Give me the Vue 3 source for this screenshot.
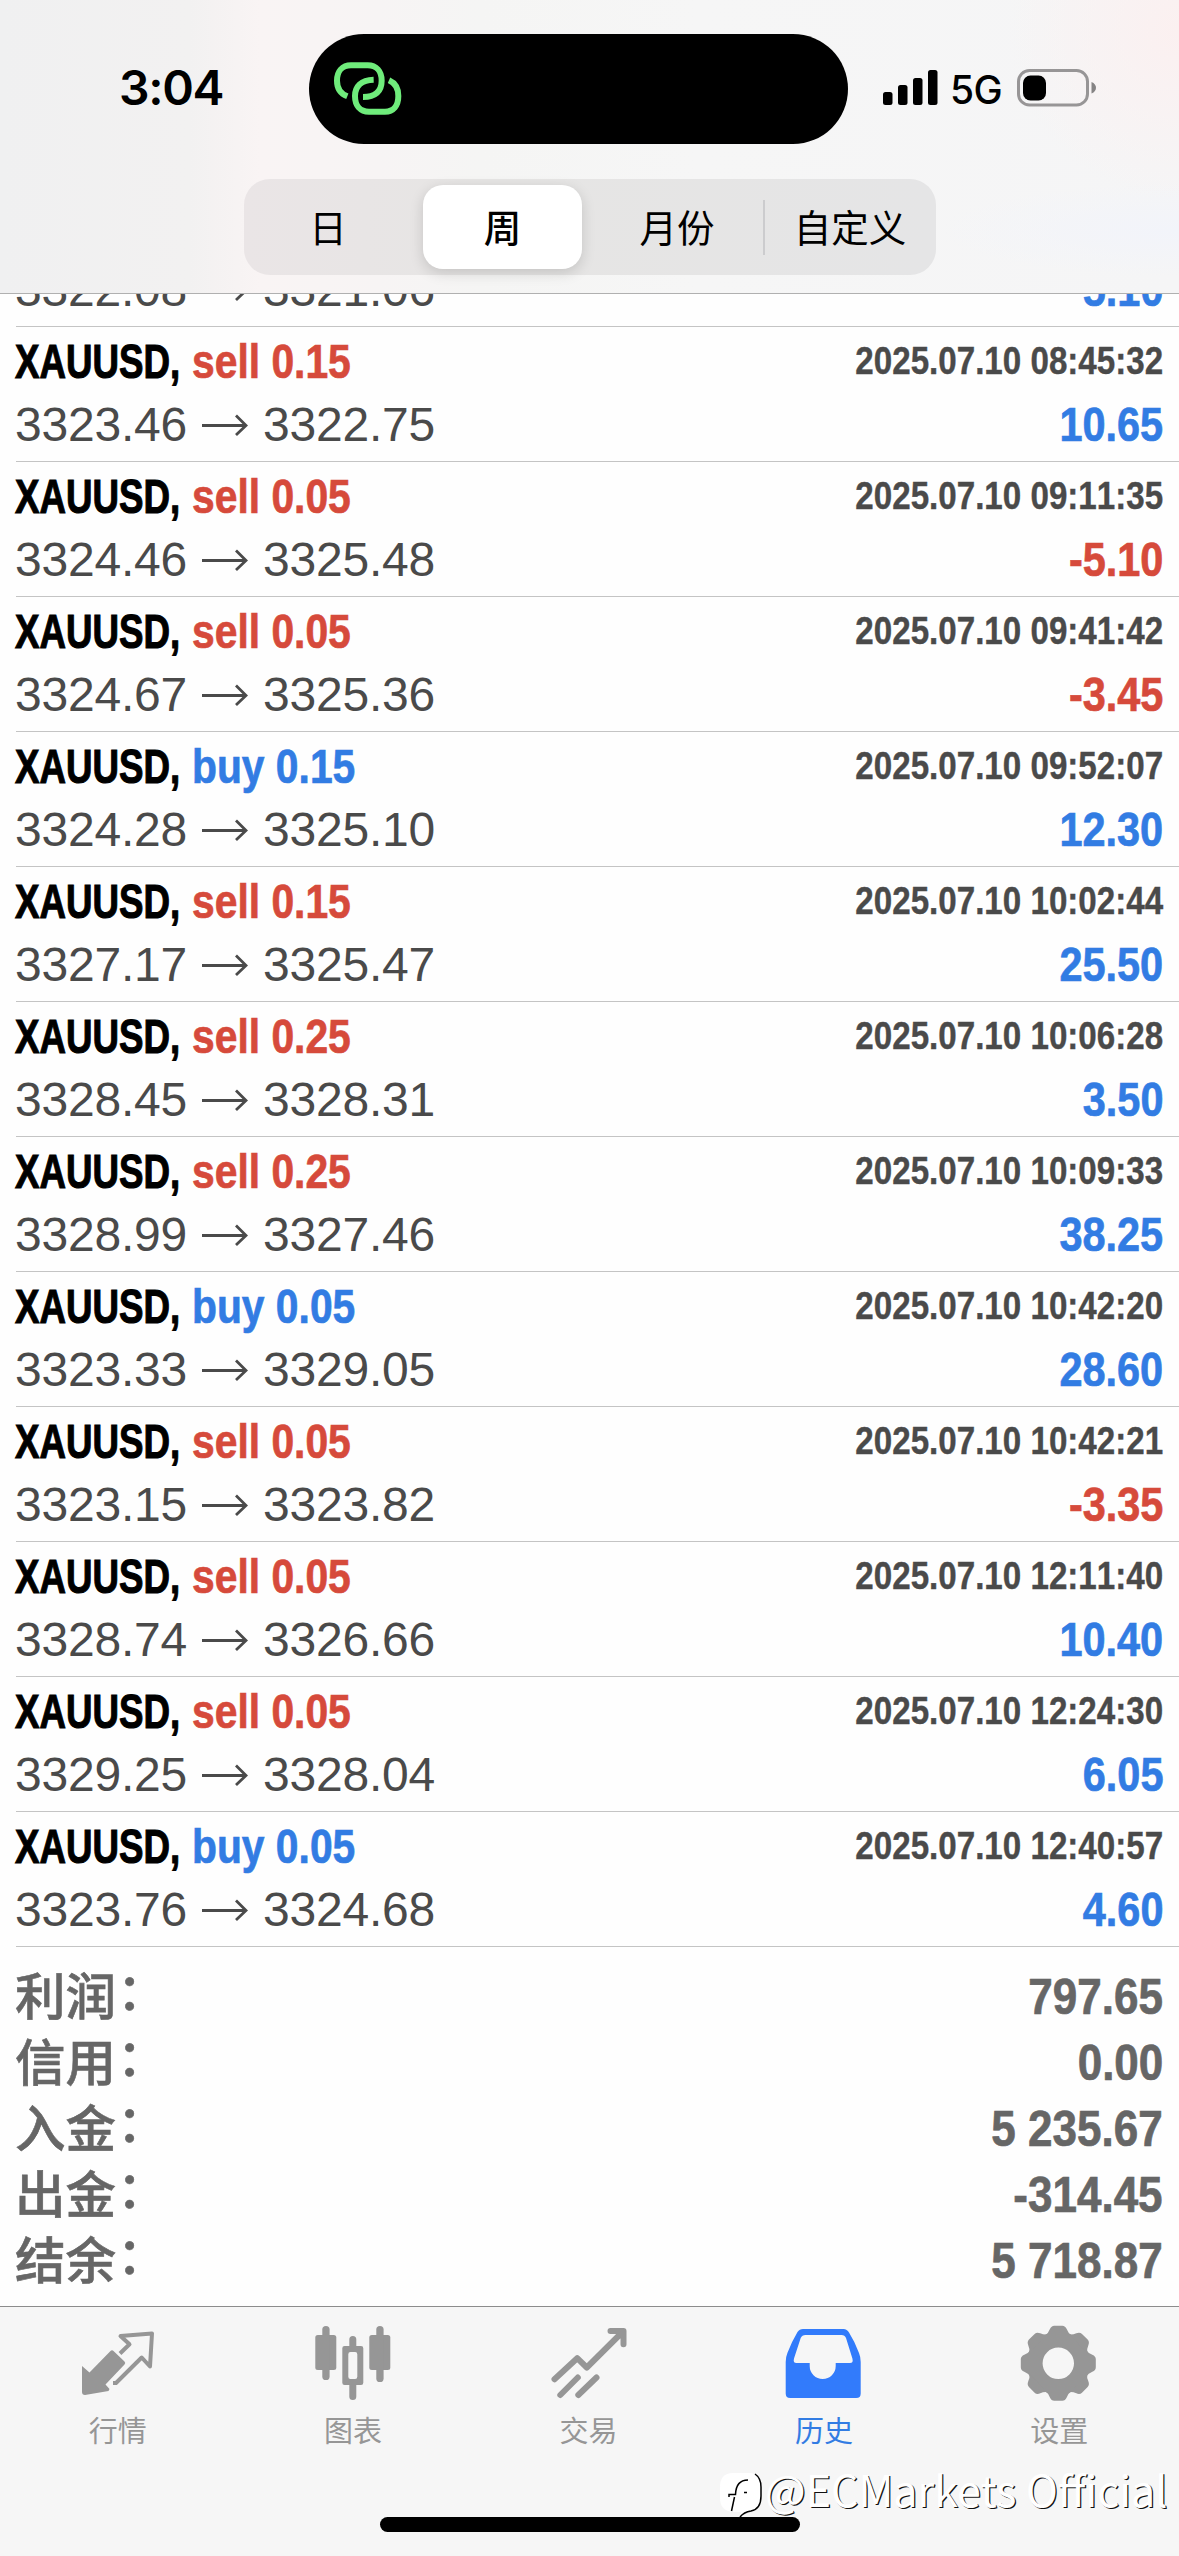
<script setup>
const periods = [
  { label: '日', width: 172 },
  { label: '周', width: 170, active: true },
  { label: '月份', width: 178 },
  { label: '自定义', width: 172, divided: true },
]

const deals = [
  ['sell', '0.05', '2025.07.10 08:41:17', '3322.08', '3321.06', '5.10'],
  ['sell', '0.15', '2025.07.10 08:45:32', '3323.46', '3322.75', '10.65'],
  ['sell', '0.05', '2025.07.10 09:11:35', '3324.46', '3325.48', '-5.10'],
  ['sell', '0.05', '2025.07.10 09:41:42', '3324.67', '3325.36', '-3.45'],
  ['buy', '0.15', '2025.07.10 09:52:07', '3324.28', '3325.10', '12.30'],
  ['sell', '0.15', '2025.07.10 10:02:44', '3327.17', '3325.47', '25.50'],
  ['sell', '0.25', '2025.07.10 10:06:28', '3328.45', '3328.31', '3.50'],
  ['sell', '0.25', '2025.07.10 10:09:33', '3328.99', '3327.46', '38.25'],
  ['buy', '0.05', '2025.07.10 10:42:20', '3323.33', '3329.05', '28.60'],
  ['sell', '0.05', '2025.07.10 10:42:21', '3323.15', '3323.82', '-3.35'],
  ['sell', '0.05', '2025.07.10 12:11:40', '3328.74', '3326.66', '10.40'],
  ['sell', '0.05', '2025.07.10 12:24:30', '3329.25', '3328.04', '6.05'],
  ['buy', '0.05', '2025.07.10 12:40:57', '3323.76', '3324.68', '4.60'],
].map(([side, lots, time, open, close, profit], i) => ({
  side, lots, time, open, close, profit, scrolled: i === 0,
}))

const totals = [
  ['利润', '797.65'],
  ['信用', '0.00'],
  ['入金', '5 235.67'],
  ['出金', '-314.45'],
  ['结余', '5 718.87'],
]

const teeth = [0, 45, 90, 135, 180, 225, 270, 315]
</script>

<template>
  <div class="screen">
    <header class="header">
      <div class="status">
        <span class="clock">3:04</span>
        <div class="island">
          <svg class="link" viewBox="40 0 212 170" fill="none" stroke="#6fec7b" stroke-width="18">
            <path d="M83 109C63 101 52 86 52 62C52 34 68 16 94 16H144C170 16 186 34 186 62C186 93 168 111 130 111" />
            <path d="M162 59C124 60 106 80 106 108C106 137 122 155 148 155H196C221 155 236 137 236 108C236 84 226 69 208 61" />
          </svg>
        </div>
        <div class="radio">
          <svg class="signal" width="54" height="35" viewBox="0 0 54 35">
            <rect x="0" y="22" width="9.500" height="13" rx="2.500" />
            <rect x="15" y="15" width="9.500" height="20" rx="2.500" />
            <rect x="30" y="8" width="9.500" height="27" rx="2.500" />
            <rect x="45" y="0" width="9.500" height="35" rx="2.500" />
          </svg>
          <span class="network">5G</span>
          <svg class="battery" width="80" height="38" viewBox="0 0 80 38">
            <rect x="1.500" y="1.500" width="69" height="34.500" rx="11" fill="none" stroke="#979596" stroke-width="3" />
            <rect x="6" y="6.500" width="23" height="25" rx="7.500" />
            <path d="M74.500 13Q79 15 79 18.800T74.500 24.500Z" fill="#858384" />
          </svg>
        </div>
      </div>
      <div class="segments">
        <div
          v-for="p in periods"
          :key="p.label"
          class="segment"
          :class="{ active: p.active, divided: p.divided }"
          :style="{ width: p.width + 'px' }"
        >
          <span>{{ p.label }}</span>
        </div>
      </div>
    </header>

    <main class="history">
      <div v-for="d in deals" :key="d.time" class="deal">
        <div class="line head">
          <template v-if="!d.scrolled">
            <span class="symbol"><b class="squeeze">XAUUSD,</b></span>
            <b class="side" :class="d.side">{{ d.side }} {{ d.lots }}</b>
            <b class="time">{{ d.time }}</b>
          </template>
        </div>
        <div class="line body">
          <span class="price">{{ d.open }}</span>
          <svg class="arrow" width="46" height="22" viewBox="0 0 46 22" fill="none" stroke="#4a4a4a" stroke-width="2.800">
            <path d="M0 11.500H44M34 1.500L44 11.500L34 21" />
          </svg>
          <span class="price">{{ d.close }}</span>
          <b class="profit" :class="{ loss: d.profit.startsWith('-') }">{{ d.profit }}</b>
        </div>
      </div>
      <div class="totals">
        <div v-for="[name, value] in totals" :key="name" class="total">
          <span class="name">{{ name }}<span class="colon">：</span></span>
          <b class="value">{{ value }}</b>
        </div>
      </div>
    </main>

    <footer class="footer">
      <nav class="tabs">
        <div class="tab">
          <svg viewBox="0 0 80 80">
            <path d="M3 44L10.500 50.500L31.500 29Q33 27.500 34.500 29L45.500 39.500Q47 41 45.500 42.500L26.500 62.500L30.500 67L29.500 69L6 73Q3 73 3 70Z" />
            <path d="M41 31.500L50.500 22.300L41.500 14L73 11.500L71 44.500L62.700 35.500L37 61H34" fill="none" stroke="#969696" stroke-width="4" stroke-linejoin="round" />
          </svg>
          <span>行情</span>
        </div>
        <div class="tab">
          <svg viewBox="0 0 80 80">
            <rect x="1.300" y="13" width="21" height="35" rx="2.500" />
            <rect x="8.300" y="4" width="7.300" height="54" rx="3.600" />
            <rect x="55.300" y="13" width="21" height="35" rx="2.500" />
            <rect x="62.300" y="4" width="7.300" height="56" rx="3.600" />
            <path fill-rule="evenodd" d="M35.300 24V17.500a3.500 3.500 0 0 1 7 0V24H47q2.300 0 2.300 2.300V60.700q0 2.300-2.300 2.300H42.300V74.500a3.500 3.500 0 0 1-7 0V63H30.600q-2.300 0-2.300-2.300V26.300q0-2.300 2.300-2.300ZM36.500 30q-2.200 0-2.200 2.200V54.800q0 2.200 2.200 2.200H41.100q2.200 0 2.200-2.200V32.200q0-2.200-2.200-2.200Z" />
          </svg>
          <span>图表</span>
        </div>
        <div class="tab">
          <svg class="stroked" viewBox="0 0 80 80">
            <path d="M4.500 57.200L27.200 36.200L36.800 45.500L73 9.500M60.500 9H73.500V22.200M10.300 73L27.800 55.500M28.300 73L46.500 55.500" />
          </svg>
          <span>交易</span>
        </div>
        <div class="tab current">
          <svg viewBox="0 0 80 80">
            <path fill-rule="evenodd" d="M18 7H58.500Q62 7 64 10.500Q70 20 74 31Q75.700 35 75.700 40V71.500Q75.700 76 71.200 76H5.200Q.7 76 .7 71.500V40Q.7 35 2.400 31Q6.500 20 12.500 10Q14.500 7 18 7ZM20.500 13Q17 13 15.700 16L9 36.500Q7.800 41 11.500 41H24.700V44a13 13 0 0 0 26 0V41H65Q68.600 41 67.400 36.500L61 16Q59.800 13 56.500 13Z" />
          </svg>
          <span>历史</span>
        </div>
        <div class="tab">
          <svg viewBox="0 0 80 80">
            <g transform="translate(38.300 41.300)">
              <circle r="23.500" fill="none" stroke="#969696" stroke-width="15.600" />
              <path
                v-for="a in teeth"
                :key="a"
                :transform="`rotate(${a})`"
                d="M-13 -28Q-10 -30 -8.500 -34Q-7 -37.500 -4 -37.500H4Q7 -37.500 8.500 -34Q10 -30 13 -28Z"
              />
            </g>
          </svg>
          <span>设置</span>
        </div>
      </nav>
      <div class="home-bar"></div>
      <div class="watermark">
        <svg width="44" height="50" viewBox="0 0 44 50">
          <path d="M14 1H30Q42 1 42 15V24Q42 36 32 39Q25 40 21 45L22 40H14Q1 39 1 26V15Q1 1 14 1Z" fill="#fff" />
          <path d="M36 2Q42 6 42 15V24Q42 37 32 39Q25 40 21 45M12.500 39L15.500 25M10 25V22.500H16.500Q17 8 29 8M25 20.500H28" fill="none" stroke="#000" stroke-width="1.500" />
        </svg>
        <span>@ECMarkets Official</span>
      </div>
    </footer>
  </div>
</template>

<style>
body {
  margin: 0;
  background: #fefefe;
}
</style>

<style scoped>
.screen {
  width: 1179px;
  height: 2556px;
  display: flex;
  flex-direction: column;
  overflow: hidden;
  background: #fefefe;
  font-family: "Liberation Sans", "Noto Sans CJK SC", sans-serif;
  font-kerning: none;
}
.header {
  box-sizing: border-box;
  flex: none;
  height: 294px;
  border-bottom: 1px solid #b0b0b0;
  background:
    radial-gradient(circle at 1179px 30px, #fbf0f0 0, #fbf0f000 170px),
    radial-gradient(ellipse at 1179px 230px, #f2f4fa 0, #f2f4fa00 240px),
    linear-gradient(90deg, #f0f0f1 0, #f2f1f1 190px, #f9f4f4 260px, #f7f4f4 380px, #f5f5f4 480px, #f6f6f6 700px, #f5f5f6 100%);
}
.status {
  display: flex;
  height: 179px;
}
.clock {
  width: 190px;
  padding-left: 119px;
  margin-top: 58px;
  font: 600 48px/60px Inter, sans-serif;
  letter-spacing: -1.300px;
}
.island {
  box-sizing: border-box;
  width: 539px;
  height: 110px;
  margin-top: 34px;
  padding: 26px 0 0 24px;
  border-radius: 55px;
  background: #000;
}
.link {
  display: block;
  width: 70.667px;
  height: 56.667px;
}
.radio {
  display: flex;
  margin: 69px 0 0 35px;
  height: 40px;
}
.signal {
  margin-top: 1px;
  overflow: visible;
}
.network {
  width: 68px;
  padding-left: 13px;
  font: 500 39px/42px Inter, sans-serif;
  letter-spacing: -0.500px;
}
.battery {
  margin-left: -1px;
}
.segments {
  display: flex;
  width: 692px;
  height: 96px;
  margin-left: 244px;
  border-radius: 26px;
  background: linear-gradient(90deg, #eae5e6, #e6e5e4 35%, #e5e5e6);
}
.segment {
  position: relative;
  height: 96px;
  font: 400 37.500px/94px "Noto Sans CJK SC", sans-serif;
  text-align: center;
}
.segment:first-child {
  text-indent: -4px;
}
.segment:nth-child(3) {
  text-indent: 4px;
}
.segment.active {
  width: 159px !important;
  height: 84px;
  margin: 6px 4px 0 7px;
  border-radius: 20px;
  background: #fff;
  box-shadow: 0 4px 14px #00000026;
  font-weight: 500;
  line-height: 82px;
}
.segment.divided::before {
  content: "";
  position: absolute;
  left: -1px;
  top: 21px;
  width: 2px;
  height: 55px;
  background: #ccccce;
}
.history {
  flex: none;
  height: 2012px;
  overflow: hidden;
}
.deal {
  box-sizing: border-box;
  height: 135px;
  margin-left: 16px;
  padding: 1px 16px 0 0;
  border-bottom: 1px solid #c4c4c4;
}
.deal:first-child {
  margin-top: -102px;
}
.line {
  display: flex;
  font-size: 48px;
  white-space: nowrap;
}
.head {
  height: 68px;
  line-height: 68px;
}
.body {
  height: 58px;
  line-height: 58px;
  color: #4a4a4a;
}
.symbol {
  width: 176px;
}
.squeeze {
  display: inline-block;
  margin-left: -1px;
  transform: scaleX(0.765);
  transform-origin: 0 50%;
  -webkit-text-stroke: 1.100px #000;
}
.side {
  transform: scaleX(0.85);
  transform-origin: 0 50%;
  -webkit-text-stroke: 0.700px currentColor;
}
.sell {
  color: #d64a3b;
}
.buy {
  color: #327ce3;
}
.time {
  margin-left: auto;
  color: #4a4a4a;
  font-size: 39px;
  line-height: 66px;
  transform: scaleX(0.85);
  transform-origin: 100% 50%;
  -webkit-text-stroke: 0.400px currentColor;
}
.price {
  width: 170px;
  margin-left: -1px;
  letter-spacing: -0.200px;
}
.arrow {
  margin: 18px 16px 0 17px;
}
.profit {
  margin-left: auto;
  color: #327ce3;
  transform: scaleX(0.863);
  transform-origin: 100% 50%;
  -webkit-text-stroke: 0.700px currentColor;
}
.profit.loss {
  color: #d64a3b;
}
.totals {
  padding: 17px 16px 0 15px;
}
.total {
  display: flex;
  justify-content: space-between;
  height: 66px;
  color: #666;
  line-height: 66px;
}
.name {
  font: 500 50.500px/58px "Noto Sans CJK SC", sans-serif;
  -webkit-text-stroke: 0.600px #666;
}
.colon {
  position: relative;
  left: 1px;
  top: -5px;
}
.value {
  font-size: 50px;
  transform: scaleX(0.88);
  transform-origin: 100% 50%;
  -webkit-text-stroke: 0.700px #666;
}
.footer {
  position: relative;
  box-sizing: border-box;
  flex: none;
  height: 250px;
  border-top: 1px solid #8c8c8c;
  background: #f6f6f6;
}
.tabs {
  display: flex;
  width: 1177px;
}
.tab {
  flex: 1;
  display: flex;
  flex-direction: column;
  align-items: center;
  padding-top: 15px;
  color: #969696;
  fill: #969696;
  font: 400 29px/40px "Noto Sans CJK SC", sans-serif;
}
.tab svg {
  width: 80px;
  height: 80px;
  margin: 0 0 7px 2px;
}
.tab .stroked {
  fill: none;
  stroke: #969696;
  stroke-width: 6;
  stroke-linecap: round;
  stroke-linejoin: round;
}
.current {
  color: #327ce3;
  fill: #327bfb;
}
.home-bar {
  width: 420px;
  height: 15px;
  margin: 68px auto 0;
  border-radius: 8px;
  background: #000;
}
.watermark {
  position: absolute;
  left: 719px;
  top: 151px;
  display: flex;
  color: #fff;
  font: 400 43px/60px "Noto Sans CJK SC", sans-serif;
  text-shadow: 1.200px 1.200px 0 #111;
  white-space: nowrap;
}
.watermark svg {
  margin: 14px 2px 0 0;
}
</style>
